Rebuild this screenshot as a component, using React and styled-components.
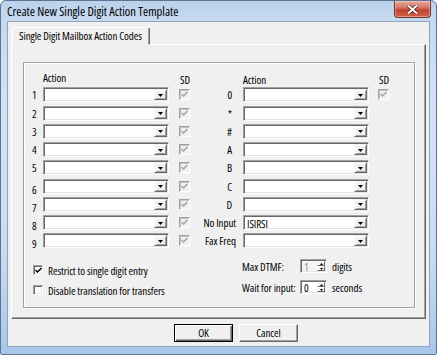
import styled, { createGlobalStyle } from "styled-components";

const GlobalStyle = createGlobalStyle`
  html, body {
    margin: 0;
    padding: 0;
    background: #ffffff;
  }
  * {
    box-sizing: border-box;
  }
`;

const leftRows = ["1", "2", "3", "4", "5", "6", "7", "8", "9"];
const rightRows = [
  { label: "0", check: true },
  { label: "*" },
  { label: "#" },
  { label: "A" },
  { label: "B" },
  { label: "C" },
  { label: "D" },
  { label: "No Input", value: "ISIRSI", wide: true },
  { label: "Fax Freq", wide: true },
];

function CheckMark({ color }) {
  return (
    <svg width="7" height="7" viewBox="0 0 7 7">
      <path d="M0.5 3 L2.5 5 L6.5 1" fill="none" stroke={color} strokeWidth="1.5" />
    </svg>
  );
}

function Combo({ value }) {
  return (
    <ComboBox>
      <ComboText>{value}</ComboText>
      <DropButton>
        <svg width="5" height="3" viewBox="0 0 5 3">
          <path d="M0 0 H5 L2.5 3 Z" fill="#000" />
        </svg>
      </DropButton>
    </ComboBox>
  );
}

function Spin({ value, disabled }) {
  return (
    <SpinBox $disabled={disabled}>
      <SpinText $disabled={disabled}>{value}</SpinText>
      <SpinButtons>
        <SpinButton>
          <svg width="3" height="2" viewBox="0 0 3 2">
            <path d="M0 2 H3 L1.5 0 Z" fill="#000" />
          </svg>
        </SpinButton>
        <SpinButton>
          <svg width="3" height="2" viewBox="0 0 3 2">
            <path d="M0 0 H3 L1.5 2 Z" fill="#000" />
          </svg>
        </SpinButton>
      </SpinButtons>
    </SpinBox>
  );
}

function App() {
  return (
    <>
      <GlobalStyle />
      <Window>
        <TitleBar>
          <TitleText>Create New Single Digit Action Template</TitleText>
          <CloseButton>
            <svg width="11" height="9" viewBox="0 0 11 9">
              <path
                d="M1 0.5 L5.5 4.5 L10 0.5 M1 8.5 L5.5 4.5 L10 8.5"
                stroke="#5a1b13"
                strokeWidth="3.4"
                fill="none"
              />
              <path
                d="M1 0.5 L5.5 4.5 L10 0.5 M1 8.5 L5.5 4.5 L10 8.5"
                stroke="#ffffff"
                strokeWidth="2"
                fill="none"
              />
            </svg>
          </CloseButton>
        </TitleBar>
        <Client>
          <TabStrip>
            <Tab>Single Digit Mailbox Action Codes</Tab>
          </TabStrip>
          <TabPanel>
            <Group>
              <Grid>
                <HeaderCell />
                <HeaderCell>Action</HeaderCell>
                <HeaderCell $end $low>SD</HeaderCell>
                <HeaderCell />
                <HeaderCell $low>Action</HeaderCell>
                <HeaderCell $end $low>SD</HeaderCell>
                {leftRows.map((digit, i) => {
                  const right = rightRows[i];
                  return [
                    <DigitLabel key={"l" + i} $low={i >= 5}>{digit}</DigitLabel>,
                    <Combo key={"c" + i} />,
                    <SdCell key={"s" + i}>
                      <SdBox>
                        <CheckMark color="#a3a3a3" />
                      </SdBox>
                    </SdCell>,
                    <KeyLabel key={"k" + i} $wide={right.wide}>{right.label}</KeyLabel>,
                    <Combo key={"r" + i} value={right.value} />,
                    <SdCell key={"t" + i}>
                      {right.check && (
                        <SdBox>
                          <CheckMark color="#a3a3a3" />
                        </SdBox>
                      )}
                    </SdCell>,
                  ];
                })}
              </Grid>
              <Bottom>
                <Options>
                  <OptionRow>
                    <OptionBox>
                      <CheckMark color="#000" />
                    </OptionBox>
                    Restrict to single digit entry
                  </OptionRow>
                  <OptionRow>
                    <OptionBox />
                    Disable translation for transfers
                  </OptionRow>
                </Options>
                <Limits>
                  <LimitRow>
                    <LimitLabel>Max DTMF:</LimitLabel>
                    <Spin value="1" disabled />
                    <Unit>digits</Unit>
                  </LimitRow>
                  <LimitRow>
                    <LimitLabel>Wait for input:</LimitLabel>
                    <Spin value="0" />
                    <Unit>seconds</Unit>
                  </LimitRow>
                </Limits>
              </Bottom>
            </Group>
          </TabPanel>
          <ButtonRow>
            <DialogButton $default>OK</DialogButton>
            <DialogButton>Cancel</DialogButton>
          </ButtonRow>
        </Client>
      </Window>
    </>
  );
}

export default App;

const Window = styled.div`
  width: 437px;
  height: 355px;
  border: 1px solid #5d7391;
  border-radius: 6px 6px 2px 2px;
  background: linear-gradient(
    to bottom,
    #bcd2eb 0px,
    #c5d9ef 18px,
    #d4e3f4 110px,
    #cadcf0 250px,
    #a8c6ea 355px
  );
  padding: 0 6px 7px 6px;
  display: flex;
  flex-direction: column;
  font-family: "Open Sans", "Liberation Sans", Arial, sans-serif;
  font-stretch: 75%;
  font-weight: 390;
  font-size: 11px;
  letter-spacing: -0.08px;
  color: #000;
`;

const TitleBar = styled.div`
  height: 20px;
  display: flex;
  align-items: flex-start;
`;

const TitleText = styled.div`
  padding-top: 3px;
  font-stretch: 82%;
  font-weight: 400;
  font-size: 12.5px;
  letter-spacing: 0;
  line-height: 15px;
`;

const CloseButton = styled.div`
  margin-left: auto;
  margin-right: -1px;
  width: 37px;
  height: 17px;
  border: 1px solid #6f3429;
  border-top: none;
  border-radius: 0 0 4px 4px;
  background: linear-gradient(to bottom, #e6a89c 0%, #d2705f 45%, #c0402b 55%, #d0624c 100%);
  box-shadow: inset 0 0 0 1px rgba(255, 255, 255, 0.35);
  display: flex;
  align-items: center;
  justify-content: center;
`;

const Client = styled.div`
  flex: 1;
  border: 1px solid #8ea4c0;
  background: #f0f0f0;
  padding: 5px 3px 4px 3px;
  display: flex;
  flex-direction: column;
`;

const TabStrip = styled.div`
  display: flex;
  padding-left: 1px;
`;

const Tab = styled.div`
  position: relative;
  z-index: 1;
  height: 18px;
  margin-bottom: -1px;
  padding: 0 7px 0 6px;
  line-height: 16px;
  background: #f0f0f0;
  border: 1px solid;
  border-color: #ffffff #696969 transparent #ffffff;
  border-radius: 2px 2px 0 0;
  box-shadow: inset -1px 0 #a0a0a0;
`;

const TabPanel = styled.div`
  height: 275px;
  border: 1px solid;
  border-color: #ffffff #696969 #696969 #ffffff;
  box-shadow: inset -1px -1px #a0a0a0;
  padding: 17px 10px 10px 11px;
  display: flex;
  flex-direction: column;
`;

const Group = styled.div`
  flex: 1;
  border: 1px solid #a0a0a0;
  box-shadow: inset 1px 1px #ffffff, 1px 1px #ffffff;
  padding-top: 8px;
  display: flex;
  flex-direction: column;
`;

const Grid = styled.div`
  display: grid;
  grid-template-columns: 19px 126px 21px 53px 126px 20px;
  grid-template-rows: 13px repeat(9, 15px);
  row-gap: 3.25px;
`;

const HeaderCell = styled.div`
  justify-self: ${(p) => (p.$end ? "end" : "start")};
  line-height: 13px;
  padding-top: ${(p) => (p.$low ? "2px" : "0")};
`;

const DigitLabel = styled.div`
  align-self: center;
  padding-left: 8px;
  padding-top: ${(p) => (p.$low ? "6px" : "0")};
  line-height: 13px;
`;

const KeyLabel = styled.div`
  align-self: center;
  text-align: right;
  padding-right: ${(p) => (p.$wide ? "7px" : "11px")};
  line-height: 13px;
  white-space: nowrap;
`;

const ComboBox = styled.div`
  height: 15px;
  border: 1px solid;
  border-color: #a0a0a0 #ffffff #ffffff #a0a0a0;
  box-shadow: inset 1px 1px #696969, inset -1px -1px #e3e3e3;
  background: #ffffff;
  padding: 2px;
  display: flex;
  align-items: stretch;
`;

const ComboText = styled.div`
  flex: 1;
  line-height: 11px;
  padding-left: 1px;
`;

const DropButton = styled.div`
  width: 13px;
  margin: -1px -1px -1px 0;
  background: #f0f0f0;
  border: 1px solid;
  border-color: #f0f0f0 #696969 #696969 #f0f0f0;
  box-shadow: inset 1px 1px #ffffff, inset -1px -1px #a0a0a0;
  display: flex;
  align-items: center;
  justify-content: center;
  padding-top: 1px;
`;

const SdCell = styled.div`
  justify-self: end;
  align-self: center;
  width: 11px;
  height: 11px;
`;

const SdBox = styled.div`
  width: 11px;
  height: 11px;
  border: 1px solid;
  border-color: #a0a0a0 #ffffff #ffffff #a0a0a0;
  box-shadow: inset 1px 1px #c4c4c4;
  background: #f0f0f0;
  display: flex;
  align-items: center;
  justify-content: center;
`;

const Bottom = styled.div`
  display: flex;
  align-items: flex-start;
  margin-top: 11px;
  padding-left: 9px;
`;

const Options = styled.div`
  width: 209px;
  padding-top: 4px;
  display: flex;
  flex-direction: column;
  gap: 6px;
`;

const OptionRow = styled.div`
  height: 14px;
  display: flex;
  align-items: center;
  gap: 5px;
  white-space: nowrap;
`;

const OptionBox = styled.div`
  width: 10px;
  height: 10px;
  border: 1px solid;
  border-color: #a0a0a0 #ffffff #ffffff #a0a0a0;
  box-shadow: inset 1px 1px #696969, inset -1px -1px #e3e3e3;
  background: #ffffff;
  display: flex;
  align-items: center;
  justify-content: center;
`;

const Limits = styled.div`
  display: flex;
  flex-direction: column;
  gap: 7px;
`;

const LimitRow = styled.div`
  height: 14px;
  display: flex;
  align-items: center;
`;

const LimitLabel = styled.div`
  width: 58px;
  white-space: nowrap;
`;

const Unit = styled.div`
  margin-left: 5px;
`;

const SpinBox = styled.div`
  width: 27px;
  height: 14px;
  border: 1px solid;
  border-color: #a0a0a0 #ffffff #ffffff #a0a0a0;
  box-shadow: inset 1px 1px #696969, inset -1px -1px #e3e3e3;
  background: ${(p) => (p.$disabled ? "#f4f4f4" : "#ffffff")};
  padding: 1px;
  display: flex;
`;

const SpinText = styled.div`
  flex: 1;
  padding-left: 2px;
  line-height: 11px;
  color: ${(p) => (p.$disabled ? "#8a8a8a" : "#000000")};
`;

const SpinButtons = styled.div`
  width: 8px;
  display: flex;
  flex-direction: column;
`;

const SpinButton = styled.div`
  flex: 1;
  background: #f0f0f0;
  border: 1px solid;
  border-color: #ffffff #696969 #696969 #ffffff;
  display: flex;
  align-items: center;
  justify-content: center;
`;

const ButtonRow = styled.div`
  display: flex;
  gap: 6px;
  margin-top: 5px;
  padding-left: 163px;
`;

const DialogButton = styled.div`
  width: 59px;
  height: 18px;
  background: #f0f0f0;
  border: 1px solid;
  border-color: ${(p) => (p.$default ? "#000000" : "#ffffff #696969 #696969 #ffffff")};
  box-shadow: ${(p) =>
    p.$default
      ? "inset 1px 1px #ffffff, inset -1px -1px #696969, inset -2px -2px #a0a0a0"
      : "inset -1px -1px #a0a0a0"};
  display: flex;
  align-items: center;
  justify-content: center;
  line-height: 14px;
`;
